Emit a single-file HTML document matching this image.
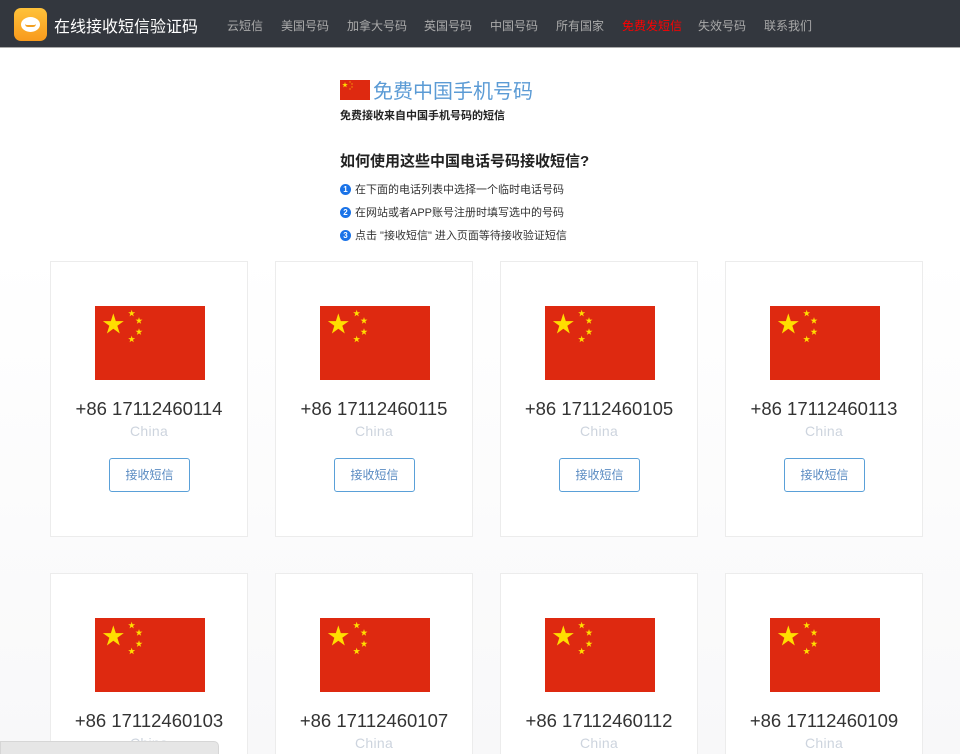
<!DOCTYPE html>
<html style="width:960px;height:754px;overflow:hidden"><head><meta charset="utf-8"><style>
*{margin:0;padding:0;box-sizing:border-box}
body{width:960px;height:754px;overflow:hidden;font-family:"Liberation Sans","Noto Sans CJK SC",sans-serif}
#wrap{position:relative;width:960px;height:754px;overflow:hidden;background:linear-gradient(#fff 0,#fff 250px,#f8f8f9 754px)}
.nav{height:48px;background:#33373e;border-bottom:1px solid #aaa;position:relative}
.logo{position:absolute;left:14px;top:8px;width:33px;height:33px;border-radius:7px;background:linear-gradient(#ffc23a,#f89a1c)}
.logo i{position:absolute;left:7px;top:9px;width:19px;height:15px;border-radius:50%;background:#fff}
.logo b{position:absolute;left:11px;top:16px;width:11px;height:3px;border-bottom:2px solid #f2a022;border-radius:0 0 6px 6px}
.brand{position:absolute;left:54px;top:13px;color:#fff;font-size:16px}
.menu{position:absolute;top:17px;font-size:12px;color:#aaa}
.h{position:absolute;left:340px}
.card{position:absolute;width:198px;height:276px;background:#fff;border:1px solid #ececec}
.card svg{position:absolute;left:44px;top:44px}
.num{position:absolute;top:136px;width:100%;text-align:center;font-size:18.5px;color:#333}
.cn{position:absolute;top:161px;width:100%;text-align:center;font-size:14px;color:#cdd4de;letter-spacing:0.3px}
.btn{position:absolute;left:58px;top:196px;width:81px;height:34px;border:1px solid #5aa0d8;border-radius:3px;color:#5a8bc2;font-size:12px;text-align:center;line-height:32px}
.dot{display:inline-block;width:11px;height:11px;border-radius:50%;background:#1a73e8;color:#fff;font-size:8px;text-align:center;line-height:11px;margin-right:4px;vertical-align:1px;font-weight:bold}
</style></head><body><div id="wrap">
<svg width="0" height="0" style="position:absolute"><defs><polygon id="st" fill="#ffde00" points="0,-1 0.2245,-0.309 0.951,-0.309 0.363,0.118 0.588,0.809 0,0.382 -0.588,0.809 -0.363,0.118 -0.951,-0.309 -0.2245,-0.309"/>
<g id="fl"><rect width="30" height="20" fill="#de2910"/><use href="#st" transform="translate(5,5) scale(3)"/><use href="#st" transform="translate(10,2) scale(1)"/><use href="#st" transform="translate(12,4) scale(1)"/><use href="#st" transform="translate(12,7) scale(1)"/><use href="#st" transform="translate(10,9) scale(1)"/></g></defs></svg>
<div class="nav">
<div class="logo"><i></i><b></b></div>
<div class="brand">在线接收短信验证码</div>
<div class="menu" style="left:227px">云短信</div>
<div class="menu" style="left:281px">美国号码</div>
<div class="menu" style="left:347px">加拿大号码</div>
<div class="menu" style="left:424px">英国号码</div>
<div class="menu" style="left:490px">中国号码</div>
<div class="menu" style="left:556px">所有国家</div>
<div class="menu" style="left:622px;color:#f00">免费发短信</div>
<div class="menu" style="left:698px">失效号码</div>
<div class="menu" style="left:764px">联系我们</div>
</div>
<svg style="position:absolute;left:340px;top:80px" width="30" height="20" viewBox="0 0 30 20"><use href="#fl"/></svg>
<div class="h" style="left:373px;top:75px;font-size:20px;color:#5b9bd5">免费中国手机号码</div>
<div class="h" style="top:107px;font-size:11px;font-weight:bold;color:#222">免费接收来自中国手机号码的短信</div>
<div class="h" style="top:150px;font-size:15px;font-weight:bold;color:#222">如何使用这些中国电话号码接收短信?</div>
<div class="h" style="top:181px;font-size:11px;color:#333"><span class="dot">1</span>在下面的电话列表中选择一个临时电话号码</div>
<div class="h" style="top:204px;font-size:11px;color:#333"><span class="dot">2</span>在网站或者APP账号注册时填写选中的号码</div>
<div class="h" style="top:227px;font-size:11px;color:#333"><span class="dot">3</span>点击 "接收短信" 进入页面等待接收验证短信</div>
<div id="cards"></div>
<script>
var nums=["17112460114","17112460115","17112460105","17112460113","17112460103","17112460107","17112460112","17112460109"];
var xs=[50,275,500,725],h="";
var flag='<svg width="110" height="74" viewBox="0 0 30 20" preserveAspectRatio="none"><use href="#fl"/></svg>';
nums.forEach(function(n,i){var t=i<4?261:573;h+='<div class="card" style="left:'+xs[i%4]+'px;top:'+t+'px;height:'+(i<4?276:181)+'px;border-bottom:'+(i<4?'1px solid #ececec':'0')+'">'+flag+'<div class="num">+86 '+n+'</div><div class="cn">China</div>'+(i<4?'<div class="btn">接收短信</div>':'')+'</div>';});
document.getElementById("cards").innerHTML=h;
</script>
<div style="position:absolute;left:0;top:741px;width:219px;height:13px;background:#e6e6e6;border-radius:0 5px 0 0;border:1px solid #d6d6d6;border-bottom:0;z-index:5"></div>
</div></body></html>
